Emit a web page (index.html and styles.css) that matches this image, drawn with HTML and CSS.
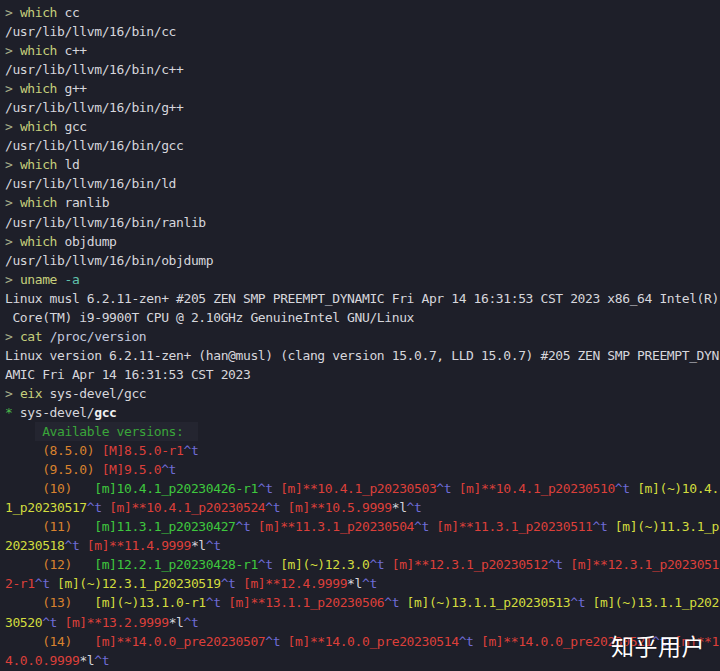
FILE: index.html
```html
<!DOCTYPE html>
<html lang="zh">
<head>
<meta charset="utf-8">
<link rel="stylesheet" href="styles.css">
</head>
<body>
<div class="term">
<div class="ln"><span class="p">&gt;</span> <span class="cmd">which</span> cc</div>
<div class="ln">/usr/lib/llvm/16/bin/cc</div>
<div class="ln"><span class="p">&gt;</span> <span class="cmd">which</span> c++</div>
<div class="ln">/usr/lib/llvm/16/bin/c++</div>
<div class="ln"><span class="p">&gt;</span> <span class="cmd">which</span> g++</div>
<div class="ln">/usr/lib/llvm/16/bin/g++</div>
<div class="ln"><span class="p">&gt;</span> <span class="cmd">which</span> gcc</div>
<div class="ln">/usr/lib/llvm/16/bin/gcc</div>
<div class="ln"><span class="p">&gt;</span> <span class="cmd">which</span> ld</div>
<div class="ln">/usr/lib/llvm/16/bin/ld</div>
<div class="ln"><span class="p">&gt;</span> <span class="cmd">which</span> ranlib</div>
<div class="ln">/usr/lib/llvm/16/bin/ranlib</div>
<div class="ln"><span class="p">&gt;</span> <span class="cmd">which</span> objdump</div>
<div class="ln">/usr/lib/llvm/16/bin/objdump</div>
<div class="ln"><span class="p">&gt;</span> <span class="cmd">uname</span> <span class="opt">-a</span></div>
<div class="ln">Linux musl 6.2.11-zen+ #205 ZEN SMP PREEMPT_DYNAMIC Fri Apr 14 16:31:53 CST 2023 x86_64 Intel(R)</div>
<div class="ln"> Core(TM) i9-9900T CPU @ 2.10GHz GenuineIntel GNU/Linux</div>
<div class="ln"><span class="p">&gt;</span> <span class="cmd">cat</span> <span class="path">/proc/version</span></div>
<div class="ln">Linux version 6.2.11-zen+ (han@musl) (clang version 15.0.7, LLD 15.0.7) #205 ZEN SMP PREEMPT_DYN</div>
<div class="ln">AMIC Fri Apr 14 16:31:53 CST 2023</div>
<div class="ln"><span class="p">&gt;</span> <span class="cmd">eix</span> sys-devel/gcc</div>
<div class="ln"><span class="star">*</span> sys-devel/<b>gcc</b></div>
<div class="ln">    <span class="hl"> <span class="av">Available versions:</span>  </span></div>
<div class="ln">     <span class="o">(8.5.0)</span> <span class="r">[M]8.5.0-r1</span><span class="b">^t</span></div>
<div class="ln">     <span class="o">(9.5.0)</span> <span class="r">[M]9.5.0</span><span class="b">^t</span></div>
<div class="ln">     <span class="o">(10)</span>   <span class="g">[m]10.4.1_p20230426-r1</span><span class="b">^t</span> <span class="r">[m]**10.4.1_p20230503</span><span class="b">^t</span> <span class="r">[m]**10.4.1_p20230510</span><span class="b">^t</span> <span class="y">[m](~)10.4.</span></div>
<div class="ln"><span class="y">1_p20230517</span><span class="b">^t</span> <span class="r">[m]**10.4.1_p20230524</span><span class="b">^t</span> <span class="r">[m]**10.5.9999</span>*l<span class="b">^t</span></div>
<div class="ln">     <span class="o">(11)</span>   <span class="g">[m]11.3.1_p20230427</span><span class="b">^t</span> <span class="r">[m]**11.3.1_p20230504</span><span class="b">^t</span> <span class="r">[m]**11.3.1_p20230511</span><span class="b">^t</span> <span class="y">[m](~)11.3.1_p</span></div>
<div class="ln"><span class="y">20230518</span><span class="b">^t</span> <span class="r">[m]**11.4.9999</span>*l<span class="b">^t</span></div>
<div class="ln">     <span class="o">(12)</span>   <span class="g">[m]12.2.1_p20230428-r1</span><span class="b">^t</span> <span class="y">[m](~)12.3.0</span><span class="b">^t</span> <span class="r">[m]**12.3.1_p20230512</span><span class="b">^t</span> <span class="r">[m]**12.3.1_p2023051</span></div>
<div class="ln"><span class="r">2-r1</span><span class="b">^t</span> <span class="y">[m](~)12.3.1_p20230519</span><span class="b">^t</span> <span class="r">[m]**12.4.9999</span>*l<span class="b">^t</span></div>
<div class="ln">     <span class="o">(13)</span>   <span class="y">[m](~)13.1.0-r1</span><span class="b">^t</span> <span class="r">[m]**13.1.1_p20230506</span><span class="b">^t</span> <span class="y">[m](~)13.1.1_p20230513</span><span class="b">^t</span> <span class="y">[m](~)13.1.1_p202</span></div>
<div class="ln"><span class="y">30520</span><span class="b">^t</span> <span class="r">[m]**13.2.9999</span>*l<span class="b">^t</span></div>
<div class="ln">     <span class="o">(14)</span>   <span class="r">[m]**14.0.0_pre20230507</span><span class="b">^t</span> <span class="r">[m]**14.0.0_pre20230514</span><span class="b">^t</span> <span class="r">[m]**14.0.0_pre20230521</span><span class="b">^t</span> <span class="r">[m]**1</span></div>
<div class="ln"><span class="r">4.0.0.9999</span>*l<span class="b">^t</span></div>
<div class="watermark">知乎用户</div>
</div>
</body>
</html>
```
FILE: styles.css
```css
html, body {
  margin: 0;
  padding: 0;
  background: #1e1f29;
}
body {
  width: 720px;
  height: 671px;
  overflow: hidden;
}
.term {
  position: relative;
  height: 671px;
  padding: 3px 0 0 5px;
  box-sizing: border-box;
  font-family: "DejaVu Sans Mono", "Liberation Mono", monospace;
  font-size: 13px;
  letter-spacing: -0.39px;
  line-height: 19.05px;
  color: #d6d6dc;
}
.ln {
  white-space: pre;
  height: 19.05px;
}
.ln b { font-weight: bold; color: #f0f0f0; }
.p { color: #a9b08a; }
.cmd { color: #c6cf7c; }
.opt { color: #62c2ad; }
.path { color: #c3c9df; }
.star { color: #4cbb4c; }
.hl { background: #242530; display: inline-block; height: 19.05px; }
.av { color: #3aa53a; }
.o { color: #d8822e; }
.r { color: #dc3f3a; }
.b { color: #6e6cd6; }
.g { color: #3ec83e; }
.y { color: #d2dc3e; }
.watermark {
  position: absolute;
  left: 611px;
  top: 629px;
  font-family: "Noto Sans CJK SC", sans-serif;
  font-size: 23px;
  line-height: 32px;
  color: #ffffff;
  letter-spacing: 0.5px;
  text-shadow: 0 0 2px rgba(0,0,0,0.5);
}
```
